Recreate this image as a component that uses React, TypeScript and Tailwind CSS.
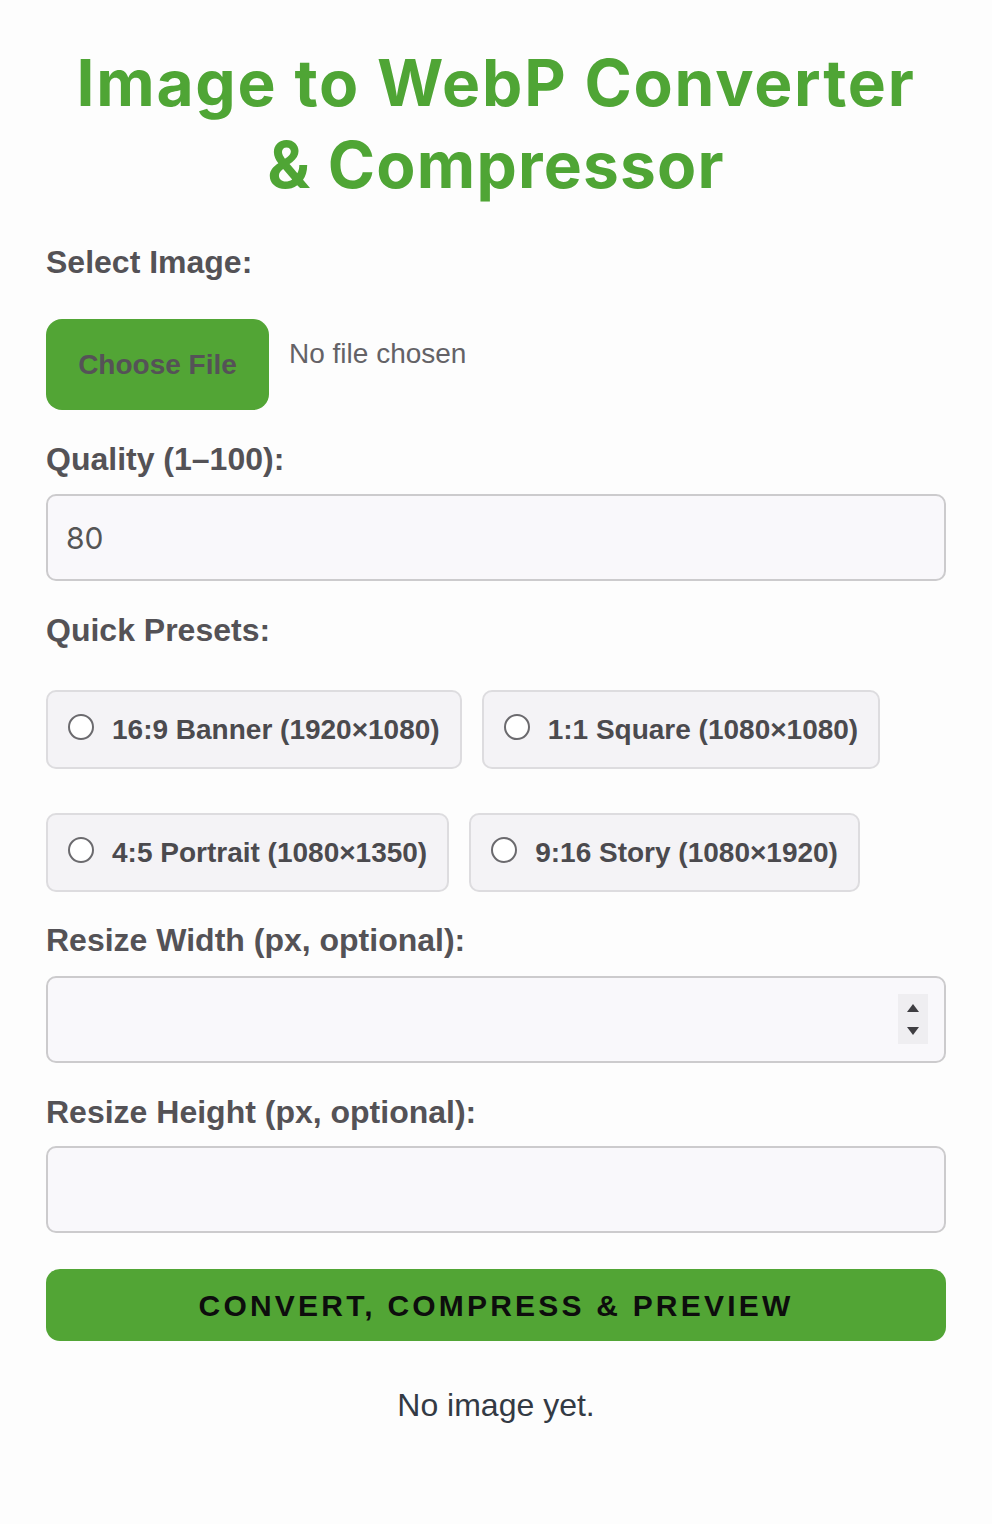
import React, { useState } from 'react';

const presets = [
  { id: 'banner', label: '16:9 Banner (1920×1080)' },
  { id: 'square', label: '1:1 Square (1080×1080)' },
  { id: 'portrait', label: '4:5 Portrait (1080×1350)' },
  { id: 'story', label: '9:16 Story (1080×1920)' },
];

const labelCls = "block text-[32px] font-bold leading-[36px] text-[#545256]";
const inputCls =
  "block w-full h-[87px] rounded-[10px] border-2 border-[#cccbcd] bg-[#f9f8fb] px-[18px] font-['Inter',sans-serif] text-[30px] text-[#555] outline-none";

const App: React.FC = () => {
  const [quality, setQuality] = useState('80');
  const [preset, setPreset] = useState('');
  const [width, setWidth] = useState('');
  const [height, setHeight] = useState('');

  return (
    <div className="min-h-[1524px] bg-[#fdfdfd] px-[46px] pt-[42px] font-['Liberation_Sans',Arial,sans-serif]">
      <h1 className="text-center font-['Inter',sans-serif] text-[64px] font-bold leading-[82px] tracking-[1.8px] text-[#4fa535]">
        Image to WebP Converter
        <br />
        <span className="tracking-[1.2px]">&amp; Compressor</span>
      </h1>

      {/* file picker */}
      <label className={`${labelCls} mt-[38px]`}>Select Image:</label>
      <div className="mt-[39px] flex items-center">
        <button className="h-[91px] w-[223px] rounded-[16px] bg-[#52a535] text-[28px] font-bold text-[#555257]">
          Choose File
        </button>
        <span className="ml-[20px] -mt-[22px] text-[28px] text-[#646266]">No file chosen</span>
      </div>

      <label className={`${labelCls} mt-[31px]`}>Quality (1–100):</label>
      <input
        className={`${inputCls} mt-[17px]`}
        value={quality}
        onChange={(e) => setQuality(e.target.value)}
      />

      <label className={`${labelCls} mt-[31px]`}>Quick Presets:</label>
      <div className="mt-[42px] flex flex-wrap gap-x-[20px] gap-y-[44px]">
        {presets.map((p) => (
          <label
            key={p.id}
            className="flex h-[79px] cursor-pointer items-center rounded-[10px] border-2 border-[#dddcdf] bg-[#f4f3f6] pl-[20px] pr-[20px]"
          >
            <span className="-mt-[6px] flex h-[26px] w-[26px] items-center justify-center rounded-full border-2 border-[#6b6a6e] bg-white">
              {preset === p.id && <span className="h-[14px] w-[14px] rounded-full bg-[#1a73e8]" />}
            </span>
            <input
              type="radio"
              name="preset"
              className="hidden"
              checked={preset === p.id}
              onChange={() => setPreset(p.id)}
            />
            <span className="ml-[18px] text-[28px] font-bold text-[#4b4a4e]">{p.label}</span>
          </label>
        ))}
      </div>

      <label className={`${labelCls} mt-[30px]`}>Resize Width (px, optional):</label>
      <div className="relative mt-[18px]">
        <input className={inputCls} value={width} onChange={(e) => setWidth(e.target.value)} />
        <div className="absolute right-[18px] top-[18px] flex h-[50px] w-[30px] flex-col items-center justify-center gap-[15px] bg-[#efeef1]">
          <svg width="12" height="8" viewBox="0 0 12 8"><path d="M6 0L12 8H0z" fill="#3f3e42" /></svg>
          <svg width="12" height="8" viewBox="0 0 12 8"><path d="M0 0h12L6 8z" fill="#3f3e42" /></svg>
        </div>
      </div>

      <label className={`${labelCls} mt-[31px]`}>Resize Height (px, optional):</label>
      <input
        className={`${inputCls} mt-[16px]`}
        value={height}
        onChange={(e) => setHeight(e.target.value)}
      />

      <button className="mt-[36px] block h-[72px] w-full rounded-[14px] bg-[#52a535] text-[30px] font-bold tracking-[3.2px] text-[#0d0d0d]">
        CONVERT, COMPRESS &amp; PREVIEW
      </button>

      <p className="mt-[40px] text-center text-[32px] text-[#333a44]">No image yet.</p>
    </div>
  );
};

export default App;
